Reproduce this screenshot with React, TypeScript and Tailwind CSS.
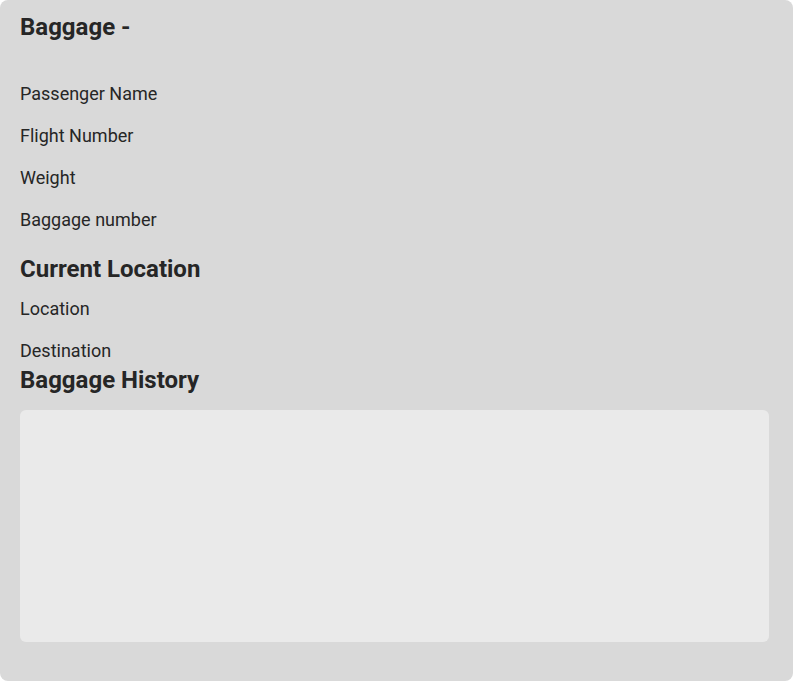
import React from "react";

const labels = ["Passenger Name", "Flight Number", "Weight", "Baggage number"];

export default function App(): React.ReactElement {
    return (
        <div className="min-h-screen bg-white font-['Roboto',sans-serif] text-[#262626]">
            <section className="flex h-[681px] w-[793px] flex-col rounded-lg bg-[#d9d9d9] px-5 pt-[11px]">
                <h1 className="text-[24px] font-bold leading-8">Baggage -</h1>

                <div className="mt-[39px] flex flex-col gap-[18px]">
                    {labels.map((l) => (
                        <p key={l} className="text-[18px] leading-6">{l}</p>
                    ))}
                </div>

                <h2 className="mt-[21px] text-[24px] font-bold leading-8">Current Location</h2>
                <p className="mt-3 text-[18px] leading-6">Location</p>
                <p className="mt-[18px] text-[18px] leading-6">Destination</p>

                <h2 className="mt-px text-[24px] font-bold leading-8">Baggage History</h2>
                <div className="mt-[14px] h-[232px] w-[749px] rounded-md bg-[#eaeaea]"></div>
            </section>
        </div>
    );
}
